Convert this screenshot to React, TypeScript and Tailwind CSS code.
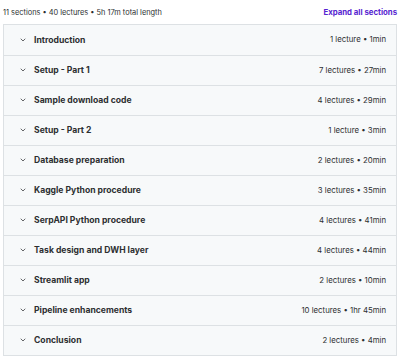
import { ChevronDown } from 'lucide-react'

const sections: { title: string; meta: string }[] = [
  { title: 'Introduction', meta: '1 lecture • 1min' },
  { title: 'Setup - Part 1', meta: '7 lectures • 27min' },
  { title: 'Sample download code', meta: '4 lectures • 29min' },
  { title: 'Setup - Part 2', meta: '1 lecture • 3min' },
  { title: 'Database preparation', meta: '2 lectures • 20min' },
  { title: 'Kaggle Python procedure', meta: '3 lectures • 35min' },
  { title: 'SerpAPI Python procedure', meta: '4 lectures • 41min' },
  { title: 'Task design and DWH layer', meta: '4 lectures • 44min' },
  { title: 'Streamlit app', meta: '2 lectures • 10min' },
  { title: 'Pipeline enhancements', meta: '10 lectures • 1hr 45min' },
  { title: 'Conclusion', meta: '2 lectures • 4min' },
]

export default function App() {
  return (
    <div className="w-[400px] h-[358px] bg-white px-[3px] pt-[7px] font-['Inter',sans-serif] text-[#2d2f31]">
      {/* summary line */}
      <div className="flex items-center justify-between h-[12px] mb-[5px]">
        <span className="text-[7.4px] text-[#2d2f31]">11 sections • 40 lectures • 5h 17m total length</span>
        <span className="text-[7.8px] font-bold text-[#5624d0]">Expand all sections</span>
      </div>

      <div className="border border-[#dde1e4] w-[394px]">
        {sections.map(({ title, meta }, i) => (
          <div
            key={title}
            className={`flex items-center justify-between h-[30px] bg-[#f7f9fa] pl-[15px] pr-[10px] ${
              i > 0 ? 'border-t border-[#dde1e4]' : ''
            }`}
          >
            <div className="flex items-center gap-[7px]">
              <ChevronDown className="w-[8px] h-[8px]" strokeWidth={2.2} />
              <span className="text-[8.6px] font-bold">{title}</span>
            </div>
            <span className="text-[7.8px] text-[#2d2f31]">{meta}</span>
          </div>
        ))}
      </div>
    </div>
  )
}
